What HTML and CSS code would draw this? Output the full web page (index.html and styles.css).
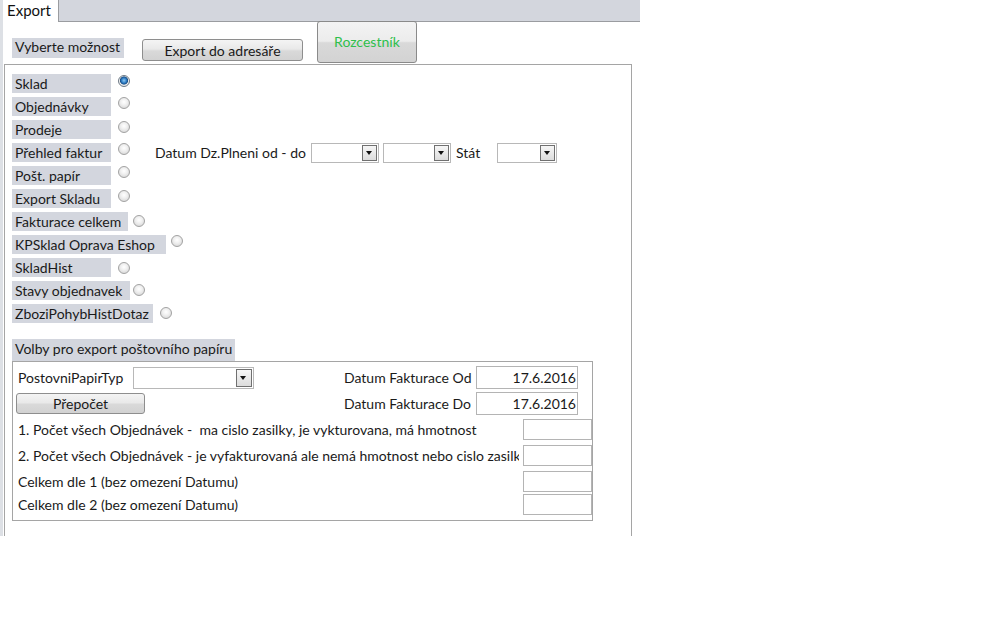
FILE: index.html
```html
<!DOCTYPE html>
<html>
<head>
  <meta charset="utf-8">
  <title>Export</title>
  <link rel="stylesheet" href="styles.css">
</head>
<body>
  <div class="frame">
    <div class="tabstrip">
      <div class="tab">Export</div>
    </div>

    <div class="header">
      <div class="caption caption-choose">Vyberte možnost</div>
      <button class="btn btn-export">Export do adresáře</button>
      <button class="btn btn-nav">Rozcestník</button>
    </div>

    <div class="options">
      <div class="opt">
        <span class="caption lbl">Sklad</span>
        <span class="radio checked"></span>
      </div>
      <div class="opt">
        <span class="caption lbl">Objednávky</span>
        <span class="radio up"></span>
      </div>
      <div class="opt">
        <span class="caption lbl">Prodeje</span>
        <span class="radio"></span>
      </div>
      <div class="opt">
        <span class="caption lbl">Přehled faktur</span>
        <span class="radio up"></span>
        <span class="dz-label">Datum Dz.Plneni od - do</span>
        <span class="combo combo-od"><span class="combo-btn"></span></span>
        <span class="combo combo-do"><span class="combo-btn"></span></span>
        <span class="stat-label">Stát</span>
        <span class="combo combo-stat"><span class="combo-btn"></span></span>
      </div>
      <div class="opt">
        <span class="caption lbl">Pošt. papír</span>
        <span class="radio up"></span>
      </div>
      <div class="opt">
        <span class="caption lbl">Export Skladu</span>
        <span class="radio"></span>
      </div>
      <div class="opt">
        <span class="caption lbl lbl-fakturace">Fakturace celkem</span>
        <span class="radio near low"></span>
      </div>
      <div class="opt">
        <span class="caption lbl lbl-kpsklad">KPSklad Oprava Eshop</span>
        <span class="radio near up"></span>
      </div>
      <div class="opt">
        <span class="caption lbl">SkladHist</span>
        <span class="radio lower"></span>
      </div>
      <div class="opt">
        <span class="caption lbl lbl-stavy">Stavy objednavek</span>
        <span class="radio tight low"></span>
      </div>
      <div class="opt">
        <span class="caption lbl lbl-zbozi">ZboziPohybHistDotaz</span>
        <span class="radio low"></span>
      </div>

      <div class="caption caption-paper">Volby pro export poštovního papíru</div>
      <div class="paper">
        <div class="paper-row">
          <span class="paper-typ">PostovniPapirTyp</span>
          <span class="combo combo-typ"><span class="combo-btn"></span></span>
          <span class="date-label">Datum Fakturace Od</span>
          <span class="textbox date-box">17.6.2016</span>
        </div>
        <div class="paper-row row-second">
          <button class="btn btn-recalc">Přepočet</button>
          <span class="date-label">Datum Fakturace Do</span>
          <span class="textbox date-box">17.6.2016</span>
        </div>
        <div class="count-row count-first">
          <span class="count-label">1. Počet všech Objednávek -&nbsp; ma cislo zasilky, je vykturovana, má hmotnost</span>
          <span class="textbox count-box"></span>
        </div>
        <div class="count-row">
          <span class="count-label count-clip">2. Počet všech Objednávek - je vyfakturovaná ale nemá hmotnost nebo cislo zasilky</span>
          <span class="textbox count-box"></span>
        </div>
        <div class="count-row">
          <span class="count-label">Celkem dle 1 (bez omezení Datumu)</span>
          <span class="textbox count-box"></span>
        </div>
        <div class="count-row count-last">
          <span class="count-label">Celkem dle 2 (bez omezení Datumu)</span>
          <span class="textbox count-box"></span>
        </div>
      </div>
    </div>
  </div>
</body>
</html>
```

FILE: styles.css
```css
:root {
  --strip-bg: #d3d6dd;
  --caption-bg: #d3d6de;
  --line: #a5a5a5;
  --box-line: #b4b4b4;
  --text: #1a1a1a;
}

body {
  margin: 0;
  background: #ffffff;
  font-family: Lato, "Open Sans", sans-serif;
  font-size: 14px;
  color: var(--text);
}

.frame {
  width: 637px;
  height: 536px;
  border-left: 3px solid #dde0e5;
}

/* Tab strip */
.tabstrip {
  height: 21px;
  background-color: var(--strip-bg);
  border-bottom: 1px solid #9a9ca0;
  display: flex;
}

.tab {
  width: 51px;
  height: 22px;
  padding-left: 4px;
  background: #ffffff;
  border-right: 1px solid #9a9ca0;
  font-size: 15px;
  line-height: 21px;
  color: #111;
}

/* Header */
.header {
  display: flex;
  align-items: flex-start;
  height: 42px;
}

.caption {
  background-color: var(--caption-bg);
  padding-left: 3px;
  box-sizing: border-box;
  white-space: nowrap;
  overflow: hidden;
}

.caption-choose {
  width: 112px;
  height: 20px;
  line-height: 18px;
  margin: 16px 0 0 9px;
}

.btn {
  font-family: inherit;
  font-size: 14px;
  color: var(--text);
  border: 1px solid #8e8e8e;
  border-radius: 3px;
  background: linear-gradient(#f4f4f4 0%, #e9e9e9 45%, #d9d9d9 55%, #d2d2d2 100%);
  padding: 0;
  box-sizing: border-box;
}

.btn-export {
  width: 161px;
  height: 22px;
  margin: 17px 0 0 18px;
}

.btn-nav {
  width: 100px;
  height: 42px;
  margin: -1px 0 0 14px;
  color: #2fbf4c;
  border-color: #8a8a8a;
  padding-bottom: 2px;
  background: linear-gradient(#f3f3f3 0%, #ececec 48%, #d9d9d9 52%, #d3d3d3 100%);
}

/* Option list */
.options {
  margin-left: 1px;
  width: 628px;
  height: 472px;
  box-sizing: border-box;
  border: 1px solid var(--line);
  border-bottom: none;
  padding: 9px 0 0 7px;
}

.opt {
  display: flex;
  align-items: flex-start;
  height: 19px;
  margin-bottom: 4px;
}

.lbl {
  width: 99px;
  height: 19px;
  line-height: 19px;
}

.lbl-fakturace { width: 116px; }
.lbl-kpsklad { width: 154px; }
.lbl-stavy { width: 118px; }
.lbl-zbozi { width: 141px; }

.radio {
  width: 12px;
  height: 12px;
  box-sizing: border-box;
  border-radius: 50%;
  border: 1px solid #a2a2a2;
  background: radial-gradient(circle at 50% 40%, #ffffff 0%, #f0f0f0 40%, #cfcfcf 100%);
  margin: 1px 0 0 7px;
  flex-shrink: 0;
}

.radio.checked {
  border-color: #6d7a86;
  background: radial-gradient(circle at 50% 45%, #8ecbf5 0%, #2a78c0 35%, #1b4f86 50%, #f2f2f2 60%, #d0d0d0 100%);
}

.radio.up { margin-top: 0; }
.radio.low { margin-top: 3px; }
.radio.lower { margin-top: 4px; }
.radio.near { margin-left: 5px; }
.radio.tight { margin-left: 3px; }

.dz-label {
  width: 156px;
  margin-left: 25px;
  line-height: 19px;
  white-space: nowrap;
}

.combo {
  display: flex;
  justify-content: flex-end;
  align-items: center;
  height: 20px;
  box-sizing: border-box;
  border: 1px solid #b8b8b8;
  background: #ffffff;
  padding-right: 1px;
}

.combo-btn {
  width: 15px;
  height: 16px;
  box-sizing: border-box;
  border: 1px solid #707070;
  background: linear-gradient(#f6f6f6, #dcdcdc);
  position: relative;
}

.combo-btn::after {
  content: "";
  position: absolute;
  left: 3px;
  top: 5px;
  border-left: 3.5px solid transparent;
  border-right: 3.5px solid transparent;
  border-top: 4px solid #111;
}

.combo-od { width: 68px; }
.combo-do { width: 68px; margin-left: 4px; }
.combo-stat { width: 60px; }

.stat-label {
  width: 41px;
  margin-left: 5px;
  line-height: 19px;
}

/* Paper section */
.caption-paper {
  width: 223px;
  height: 22px;
  line-height: 20px;
  margin-top: 16px;
}

.paper {
  width: 581px;
  height: 160px;
  box-sizing: border-box;
  border: 1px solid var(--line);
  padding: 4px 0 0 3px;
}

.paper-row {
  display: flex;
  align-items: center;
  height: 23px;
}

.row-second { margin-top: 3px; }

.paper-typ {
  width: 115px;
  margin-left: 2px;
}

.combo-typ {
  width: 121px;
  height: 22px;
  margin-right: 90px;
}

.combo-typ .combo-btn {
  height: 18px;
  width: 16px;
}

.combo-typ .combo-btn::after { top: 6px; }

.btn-recalc {
  width: 129px;
  height: 21px;
  margin-right: 199px;
}

.date-label {
  width: 132px;
}

.textbox {
  display: block;
  box-sizing: border-box;
  border: 1px solid var(--box-line);
  background: #ffffff;
}

.date-box {
  width: 102px;
  height: 23px;
  line-height: 21px;
  text-align: right;
  padding-right: 1px;
}

.count-row {
  display: flex;
  align-items: center;
  height: 21px;
  margin-top: 5px;
}

.count-first { margin-top: 4px; }
.count-last { margin-top: 2px; }

.count-label {
  width: 505px;
  margin-left: 2px;
  overflow: hidden;
  white-space: nowrap;
}

/* the form control is narrower than its caption, as in the original */
.count-clip {
  width: 501px;
  margin-right: 4px;
}

.count-box {
  width: 69px;
  height: 21px;
}
```
